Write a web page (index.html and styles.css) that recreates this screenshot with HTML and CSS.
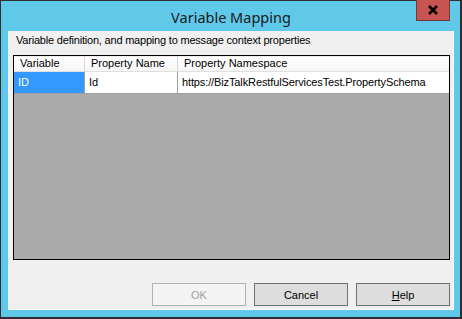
FILE: index.html
```html
<!DOCTYPE html>
<html>
<head>
<meta charset="utf-8">
<link rel="stylesheet" href="styles.css">
</head>
<body>
<div class="window">
  <div class="titlebar">
    <span class="title">Variable Mapping</span>
    <div class="close">
      <svg width="12" height="10" viewBox="0 0 12 10"><path d="M2 1 L10 9 M10 1 L2 9" stroke="#000" stroke-width="2.6" fill="none"/></svg>
    </div>
  </div>
  <div class="client">
    <div class="label">Variable definition, and mapping to message context properties</div>
    <div class="grid">
      <div class="row header">
        <div class="cell c1">Variable</div>
        <div class="cell c2">Property Name</div>
        <div class="cell c3">Property Namespace</div>
      </div>
      <div class="row data">
        <div class="cell c1 selected">ID</div>
        <div class="cell c2">Id</div>
        <div class="cell c3 url">https://BizTalkRestfulServicesTest.PropertySchema</div>
      </div>
    </div>
    <div class="buttons">
      <div class="btn disabled">OK</div>
      <div class="btn">Cancel</div>
      <div class="btn"><span class="u">H</span>elp</div>
    </div>
  </div>
</div>
</body>
</html>
```
FILE: styles.css
```css
html, body { margin: 0; padding: 0; }
body { width: 462px; height: 319px; overflow: hidden; font-family: "Liberation Sans", Arial, sans-serif; font-size: 11px; }
.window {
  box-sizing: border-box;
  width: 462px; height: 319px;
  background: #60c9ea;
  border-style: solid; border-color: #2e2e2e;
  border-width: 1px 2px 2px 1px;
  padding: 0 6px 7px 7px;
  display: flex; flex-direction: column;
}
.titlebar {
  position: relative;
  height: 30px;
  display: flex; align-items: center; justify-content: center;
}
.title {
  font-family: "Noto Sans", "Open Sans", sans-serif;
  font-size: 14.5px; color: #1a1a1a;
  margin-top: 1px;
}
.close {
  position: absolute; top: -1px; right: 4px;
  box-sizing: border-box;
  width: 34px; height: 21px;
  background: #c75450;
  border: 1px solid #6e3a3a;
  border-top: none;
  display: flex; align-items: center; justify-content: center;
}
.client {
  flex: 1;
  background: #f0f0f0;
  box-shadow: inset -1px -1px 0 #fbfbfb;
  display: flex; flex-direction: column;
  color: #000;
}
.label {
  height: 24px; box-sizing: border-box;
  padding: 3px 0 0 8px;
  line-height: 13px;
  letter-spacing: -0.2px;
}
.grid {
  box-sizing: border-box;
  margin-left: 5px;
  width: 437px; height: 205px;
  border: 1px solid #000;
  background: #ababab;
}
.row { display: flex; }
.cell { box-sizing: border-box; padding-left: 5px; white-space: nowrap; overflow: hidden; }
.c1 { width: 71px; }
.c2 { width: 93px; }
.c3 { flex: 1; }
.header { height: 16px; }
.header .cell {
  background: linear-gradient(#ececec 0, #ececec 1px, #ffffff 1px, #f6f6f6);
  border-right: 1px solid #d5d5d5;
  border-bottom: 1px solid #e0e0e0;
  line-height: 15px;
  padding-left: 6px;
}
.header .c3 { border-right: none; }
.data { height: 22px; }
.data .cell {
  background: #fff;
  border-right: 1px solid #a0a0a0;
  border-bottom: 1px solid #a0a0a0;
  line-height: 21px;
  padding-left: 4px;
}
.data .c3 { border-right: none; }
.data .url { letter-spacing: -0.12px; }
.data .cell.selected { background: #3399ff; color: #fff; }
.buttons {
  display: flex; justify-content: flex-end; gap: 8px;
  margin-top: 23px; padding-right: 4px;
}
.btn {
  box-sizing: border-box;
  width: 94px; height: 23px;
  background: #dddddd;
  border: 1px solid #707070;
  display: flex; align-items: center; justify-content: center;
  color: #000;
}
.btn.disabled { background: #f4f4f4; border-color: #adb2b5; color: #a0a0a0; }
.u { text-decoration: underline; }
```
